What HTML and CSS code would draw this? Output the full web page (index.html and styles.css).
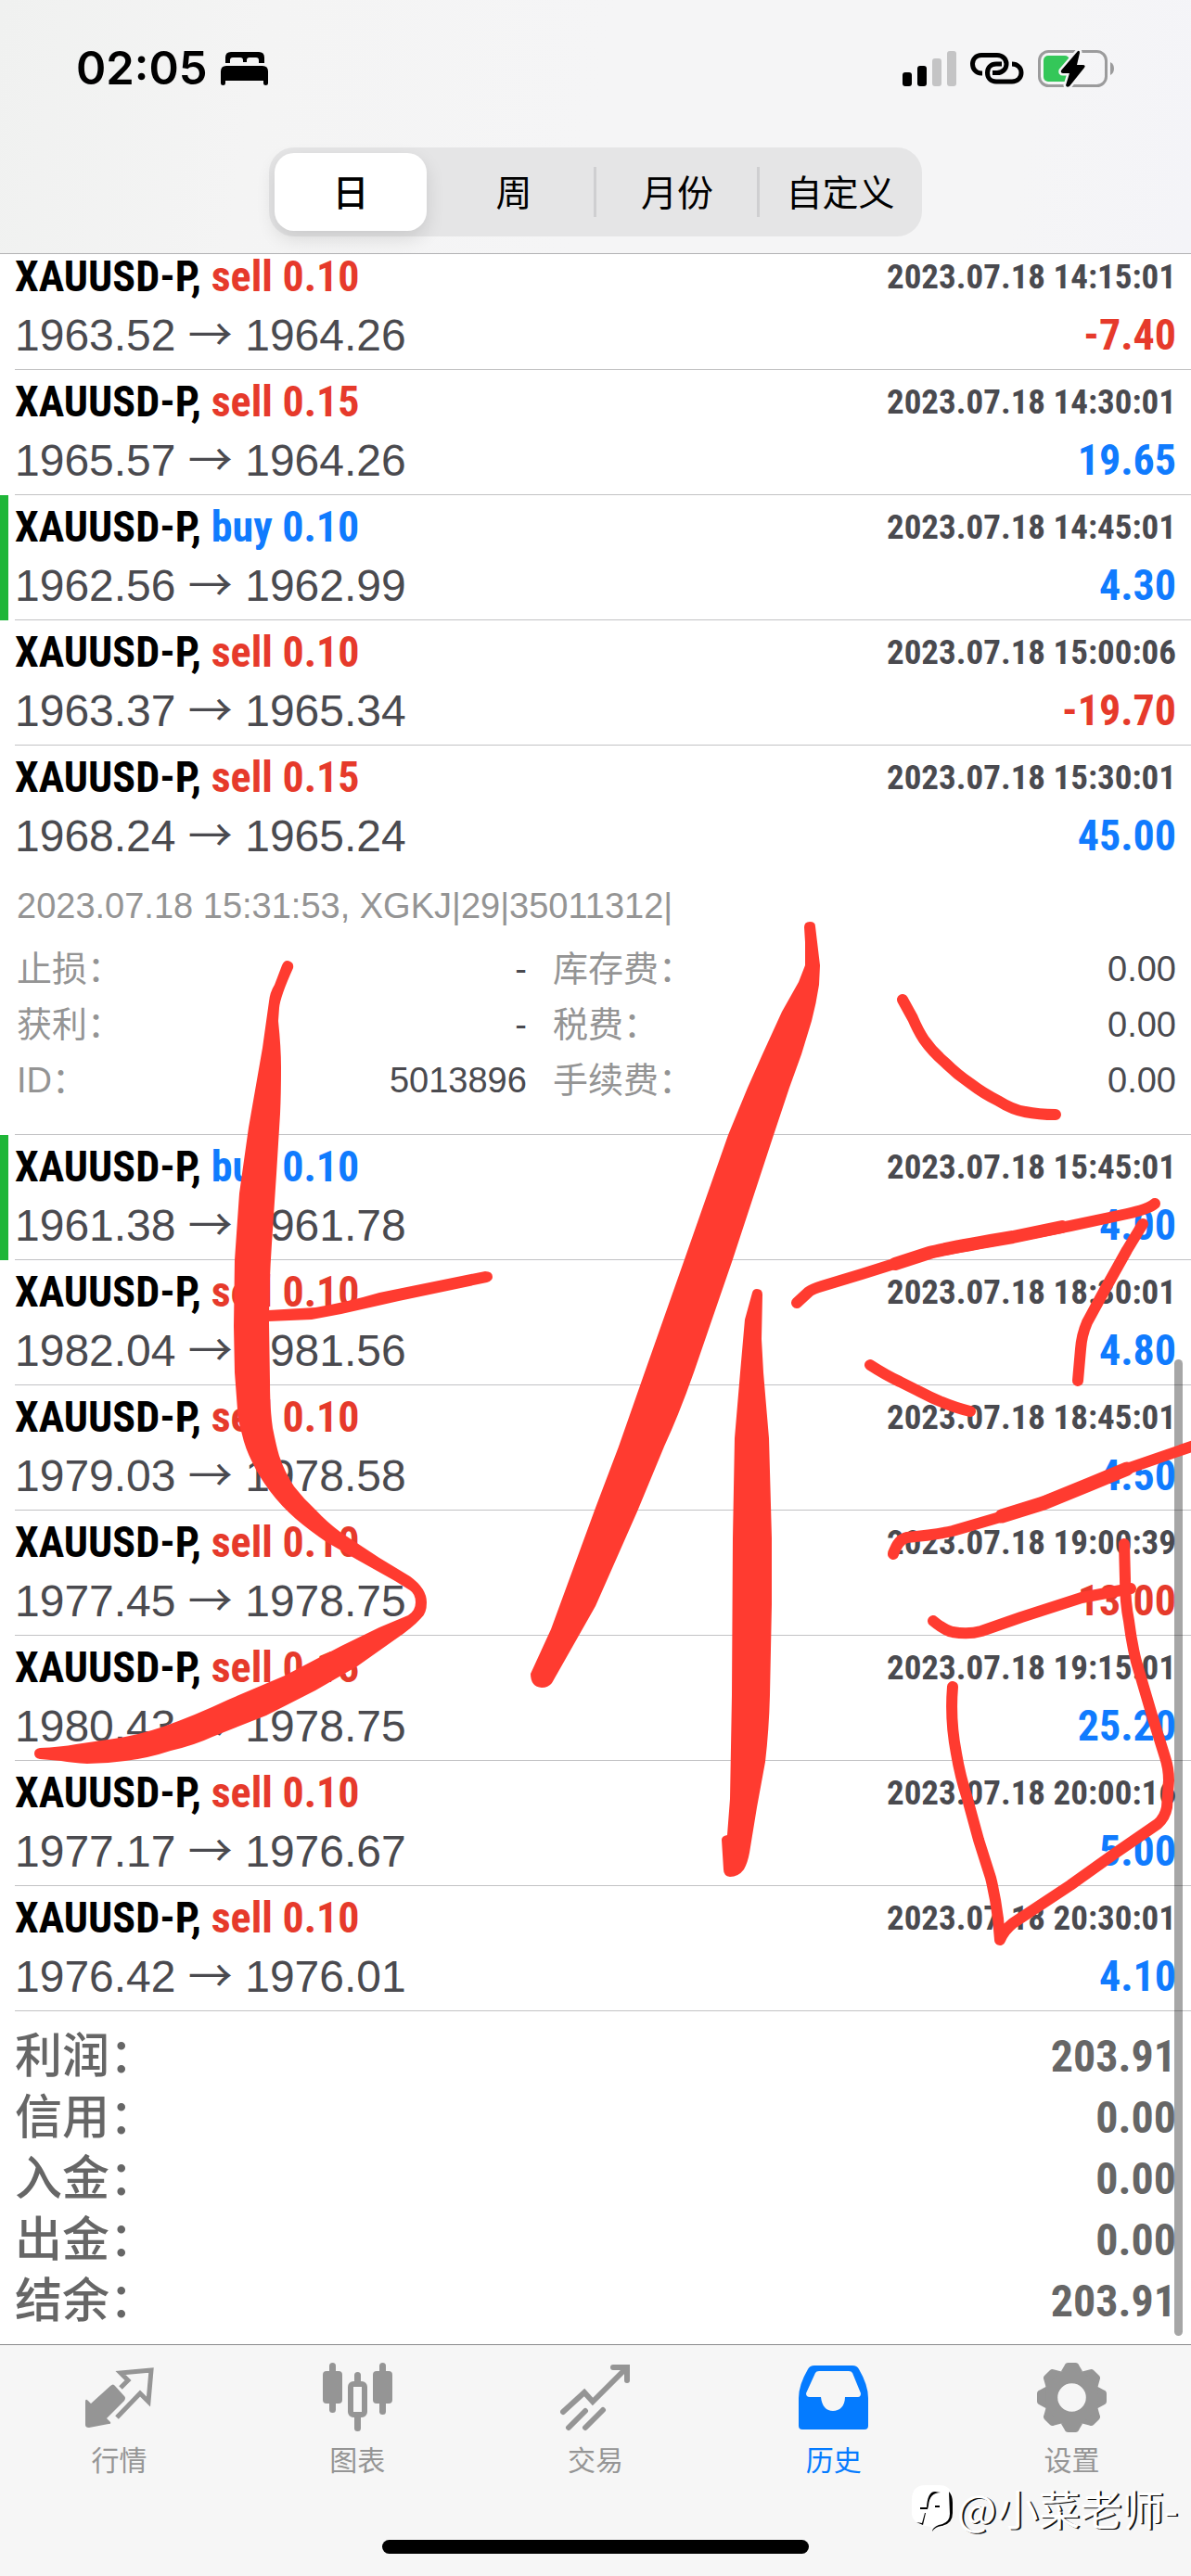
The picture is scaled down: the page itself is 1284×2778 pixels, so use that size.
FILE: index.html
```html
<!DOCTYPE html>
<html lang="zh-CN">
<head>
<meta charset="utf-8">
<meta name="viewport" content="width=device-width">
<title>历史</title>
<link rel="stylesheet" href="styles.css">
</head>
<body>
<header class="header">
  <div class="status">
    <span class="status-time">02:05</span>
    <svg class="icon-bed" viewBox="0 0 51 36" width="51" height="36"><path d="M5 12V6q0-6 6-6H41q6 0 6 6V12H41V9q0-3-3-3H31q-3 0-3 3V11H24V9q0-3-3-3H13q-3 0-3 3V12ZM6 15H45q6 0 6 6V34q0 2-2.500 2T46 34V31H5V34q0 2-2.500 2T0 34V21q0-6 6-6Z"/></svg>
    <span class="status-right">
      <svg viewBox="0 0 58 38" width="58" height="38"><rect y="23" width="10" height="15" rx="3"/><rect x="16" y="16" width="10" height="22" rx="3"/><g fill="#c4c4c5"><rect x="32" y="8" width="10" height="30" rx="3"/><rect x="48" width="10" height="38" rx="3"/></g></svg>
      <svg viewBox="0 0 58 34" width="58" height="34" fill="none" stroke="#000" stroke-width="5"><path d="M13 22H12C6 22 2.500 17 2.500 12S6 2.500 12 2.500H29C35 2.500 39 7 39 12S35 21.500 29 21.500H24"/><path d="M45 12C51 12 55 16 55 21.500S51 31 45 31H28C22 31 18.500 27 18.500 21.500S22 12 28 12H34"/></svg>
      <svg viewBox="0 0 83 40" width="83" height="40"><rect x="1.500" y="1.500" width="72" height="37" rx="10" fill="none" stroke="#9b9b9c" stroke-width="3"/><path d="M78 13q4 2 4 7t-4 7Z" fill="#9b9b9c"/><rect x="6" y="6" width="28" height="28" rx="5" fill="#34c759"/><path d="M43 1L25 22Q24 25 27 25H34L30 38Q31 41 34 39L50 19Q52 16 48 16H42L45 3Q45 0 43 1Z" stroke="#f5f5f6" stroke-width="5" paint-order="stroke"/></svg>
    </span>
  </div>
  <div class="segments">
    <button class="segment is-active" type="button">日</button>
    <button class="segment" type="button">周</button>
    <button class="segment has-rule" type="button">月份</button>
    <button class="segment has-rule" type="button">自定义</button>
  </div>
</header>

<main class="history">
  <ul class="deals">
    <li class="deal"><div class="deal-body">
      <div class="line"><b class="symbol">XAUUSD-P, <span class="neg">sell 0.10</span></b><time class="date">2023.07.18 14:15:01</time></div>
      <div class="line"><span class="prices">1963.52 <i class="arrow">→</i> 1964.26</span><b class="profit neg">-7.40</b></div>
    </div></li>
    <li class="deal"><div class="deal-body">
      <div class="line"><b class="symbol">XAUUSD-P, <span class="neg">sell 0.15</span></b><time class="date">2023.07.18 14:30:01</time></div>
      <div class="line"><span class="prices">1965.57 <i class="arrow">→</i> 1964.26</span><b class="profit pos">19.65</b></div>
    </div></li>
    <li class="deal is-marked"><div class="deal-body">
      <div class="line"><b class="symbol">XAUUSD-P, <span class="pos">buy 0.10</span></b><time class="date">2023.07.18 14:45:01</time></div>
      <div class="line"><span class="prices">1962.56 <i class="arrow">→</i> 1962.99</span><b class="profit pos">4.30</b></div>
    </div></li>
    <li class="deal"><div class="deal-body">
      <div class="line"><b class="symbol">XAUUSD-P, <span class="neg">sell 0.10</span></b><time class="date">2023.07.18 15:00:06</time></div>
      <div class="line"><span class="prices">1963.37 <i class="arrow">→</i> 1965.34</span><b class="profit neg">-19.70</b></div>
    </div></li>
    <li class="deal"><div class="deal-body">
      <div class="line"><b class="symbol">XAUUSD-P, <span class="neg">sell 0.15</span></b><time class="date">2023.07.18 15:30:01</time></div>
      <div class="line"><span class="prices">1968.24 <i class="arrow">→</i> 1965.24</span><b class="profit pos">45.00</b></div>
      <div class="details">
        <p class="comment">2023.07.18 15:31:53, XGKJ|29|35011312|</p>
        <dl class="facts">
          <div class="fact"><dt>止损：</dt><dd>-</dd></div>
          <div class="fact"><dt>库存费：</dt><dd>0.00</dd></div>
          <div class="fact"><dt>获利：</dt><dd>-</dd></div>
          <div class="fact"><dt>税费：</dt><dd>0.00</dd></div>
          <div class="fact"><dt>ID：</dt><dd>5013896</dd></div>
          <div class="fact"><dt>手续费：</dt><dd>0.00</dd></div>
        </dl>
      </div>
    </div></li>
    <li class="deal is-marked"><div class="deal-body">
      <div class="line"><b class="symbol">XAUUSD-P, <span class="pos">buy 0.10</span></b><time class="date">2023.07.18 15:45:01</time></div>
      <div class="line"><span class="prices">1961.38 <i class="arrow">→</i> 1961.78</span><b class="profit pos">4.00</b></div>
    </div></li>
    <li class="deal"><div class="deal-body">
      <div class="line"><b class="symbol">XAUUSD-P, <span class="neg">sell 0.10</span></b><time class="date">2023.07.18 18:30:01</time></div>
      <div class="line"><span class="prices">1982.04 <i class="arrow">→</i> 1981.56</span><b class="profit pos">4.80</b></div>
    </div></li>
    <li class="deal"><div class="deal-body">
      <div class="line"><b class="symbol">XAUUSD-P, <span class="neg">sell 0.10</span></b><time class="date">2023.07.18 18:45:01</time></div>
      <div class="line"><span class="prices">1979.03 <i class="arrow">→</i> 1978.58</span><b class="profit pos">4.50</b></div>
    </div></li>
    <li class="deal"><div class="deal-body">
      <div class="line"><b class="symbol">XAUUSD-P, <span class="neg">sell 0.10</span></b><time class="date">2023.07.18 19:00:39</time></div>
      <div class="line"><span class="prices">1977.45 <i class="arrow">→</i> 1978.75</span><b class="profit neg">-13.00</b></div>
    </div></li>
    <li class="deal"><div class="deal-body">
      <div class="line"><b class="symbol">XAUUSD-P, <span class="neg">sell 0.15</span></b><time class="date">2023.07.18 19:15:01</time></div>
      <div class="line"><span class="prices">1980.43 <i class="arrow">→</i> 1978.75</span><b class="profit pos">25.20</b></div>
    </div></li>
    <li class="deal"><div class="deal-body">
      <div class="line"><b class="symbol">XAUUSD-P, <span class="neg">sell 0.10</span></b><time class="date">2023.07.18 20:00:16</time></div>
      <div class="line"><span class="prices">1977.17 <i class="arrow">→</i> 1976.67</span><b class="profit pos">5.00</b></div>
    </div></li>
    <li class="deal"><div class="deal-body">
      <div class="line"><b class="symbol">XAUUSD-P, <span class="neg">sell 0.10</span></b><time class="date">2023.07.18 20:30:01</time></div>
      <div class="line"><span class="prices">1976.42 <i class="arrow">→</i> 1976.01</span><b class="profit pos">4.10</b></div>
    </div></li>
  </ul>
  <dl class="totals">
    <div class="total"><dt>利润：</dt><dd>203.91</dd></div>
    <div class="total"><dt>信用：</dt><dd>0.00</dd></div>
    <div class="total"><dt>入金：</dt><dd>0.00</dd></div>
    <div class="total"><dt>出金：</dt><dd>0.00</dd></div>
    <div class="total"><dt>结余：</dt><dd>203.91</dd></div>
  </dl>
  <div class="scrollbar"></div>
</main>

<footer class="footer">
  <nav class="tabs">
    <a class="tab" href="#quotes"><svg viewBox="0 0 75 75" width="75" height="75"><path d="M1 42Q1 38 4 41L7 44L28 25Q31 22 33 25L43 36Q45 38 43 41L24 60L28 64Q29 66 26 66L5 70Q1 70 1 67Z"/><path d="M39 27L47 19L39 11L72 8L69 42L60 33L35 59" fill="none" stroke="currentColor" stroke-width="5"/></svg>行情</a>
    <a class="tab" href="#charts"><svg viewBox="0 0 75 75" width="75" height="75"><rect x="7" width="7" height="54" rx="3.500"/><rect y="9" width="21" height="35" rx="4"/><rect x="61" width="7" height="56" rx="3.500"/><rect x="54" y="9" width="21" height="35" rx="4"/><rect x="34" y="10" width="7" height="16" rx="3.500"/><rect x="34" y="55" width="7" height="19" rx="3.500"/><rect x="30" y="23" width="15" height="33" rx="3" fill="none" stroke="currentColor" stroke-width="6"/></svg>图表</a>
    <a class="tab" href="#trade"><svg viewBox="0 0 75 75" width="75" height="75" fill="none" stroke="currentColor" stroke-width="6" stroke-linecap="round"><path d="M3 53L26 32L35 42L71 6M57 5H72V19M9 70L27 52M27 70L46 51"/></svg>交易</a>
    <a class="tab is-current" href="#history"><svg viewBox="0 0 75 75" width="75" height="75"><path fill-rule="evenodd" d="M17 3H58Q63 3 65 7Q75 24 75 38V68Q75 72 71 72H4Q0 72 0 68V38Q0 24 10 7Q12 3 17 3ZM22 9Q19 9 18 11L8 33Q8 37 12 37H24C25 47 30 52 37 52S50 47 50 37H64Q67 37 67 33L58 11Q57 9 54 9Z"/></svg>历史</a>
    <a class="tab" href="#settings"><svg viewBox="-38 -38 76 76" width="75" height="75"><circle r="23" fill="none" stroke="currentColor" stroke-width="15"/><path id="tooth" d="M-12-28L-8-35Q-7-38-4-38H4Q7-38 8-35L12-28Z"/><use href="#tooth" transform="rotate(45)"/><use href="#tooth" transform="rotate(90)"/><use href="#tooth" transform="rotate(135)"/><use href="#tooth" transform="rotate(180)"/><use href="#tooth" transform="rotate(225)"/><use href="#tooth" transform="rotate(270)"/><use href="#tooth" transform="rotate(315)"/></svg>设置</a>
  </nav>
  <div class="home-bar"></div>
  <div class="watermark">
    <svg viewBox="0 0 46 52" width="46" height="52"><path d="M16 1H30Q45 1 45 17V32Q45 44 33 46Q27 46 23 51L22 46Q2 44 1 32V17Q1 1 16 1Z" fill="#fff"/><path d="M41 8Q45 12 45 20V31Q45 43 33 45Q26 46 23 51Q23 47 30 44Q42 42 42 32ZM32 9Q20 9 19 23L18 27H10V25H17Q18 8 26 8ZM16 31L13 44L6 41L12 42L15 31ZM26 23H31V25H26Z"/></svg>
    <span>@小菜老师-</span>
  </div>
</footer>

<!-- Freehand marker layer -->
<svg class="ink" viewBox="0 0 1284 2778" fill="#ff3b30" aria-hidden="true">
  <path d="M304 1041Q307 1034 313 1037Q317 1039 316 1044Q302 1075 301 1087L300 1101Q303 1130 303 1151Q303 1180 302 1201L298 1266L293 1341Q290 1385 290 1426L291 1490Q291 1520 294 1540Q298 1560 301 1570Q307 1588 317 1603Q327 1616 340 1628Q353 1642 368 1653L409 1680L442 1700Q460 1713 460 1728Q460 1740 454 1745Q444 1756 426 1768L385 1797L340 1823L287 1850L229 1873Q210 1882 184 1888Q160 1896 135 1899Q114 1902 94 1902Q78 1901 66 1899L43 1897Q37 1896 37 1891T43 1885Q65 1884 82 1881L123 1875Q150 1871 176 1862Q210 1850 246 1833L307 1807L368 1775L409 1755L440 1742Q448 1737 448 1728T442 1715L426 1705L385 1682L352 1663Q333 1650 319 1638Q303 1624 291 1608Q279 1592 272 1577Q264 1561 261 1547Q256 1530 256 1520L253 1480L252 1430L253 1359L258 1287L268 1216L283 1130L290 1080Q291 1070 296 1062Z"/>
  <path d="M289 1413L340 1410Q375 1404 409 1394L523 1371Q531 1371 531 1377Q531 1381 525 1383L430 1403L368 1417L336 1423L289 1425Z"/>
  <path d="M867 1000Q867 994 873 994T879 999L884 1041L883 1062Q880 1082 875 1101L864 1137L851 1173L834 1224L790 1358L748 1480Q733 1523 716 1560L687 1630L642 1732L595 1815Q591 1820 584 1820Q572 1819 572 1805L594 1757L642 1626L667 1560L695 1480L738 1358L785 1224L806 1173L822 1137L843 1091L861 1059L868 1041L868 1016Z"/>
  <path d="M811 1394Q812 1390 816 1390Q822 1390 822 1396L821 1444L823 1480L829 1551L832 1659V1730L830 1828Q829 1866 825 1900L816 1949L808 1998Q806 2009 802 2016Q796 2024 787 2024Q780 2023 780 2016L778 1984Q778 1980 784 1979L787 1940L789 1828L790 1659L792 1551L798 1480L803 1423Z"/>
  <g fill="none" stroke="#ff3b30" stroke-width="12" stroke-linecap="round" stroke-linejoin="round">
    <path d="M973 1078L984 1098Q990 1112 996 1121Q1005 1134 1019 1146Q1032 1159 1047 1169Q1060 1179 1076 1187Q1092 1197 1105 1199Q1120 1202 1138 1202"/>
    <path d="M859 1405L872 1393Q876 1390 886 1387L929 1374L1002 1351L1092 1334L1154 1322L1215 1309Q1238 1304 1245 1298"/>
    <path stroke-width="14" d="M965 1363L1002 1351Q1015 1347 1092 1334L1145 1323"/>
    <path d="M1232 1320L1215 1348L1191 1391L1172 1426Q1166 1440 1165 1455L1162 1489"/>
    <path d="M938 1472Q955 1483 970 1490L990 1500Q1020 1516 1046 1522"/>
    <path d="M963 1676Q968 1660 978 1658Q1010 1655 1027 1651L1092 1632L1174 1601L1215 1584L1290 1558"/>
    <path stroke-width="15" d="M1080 1635L1125 1621L1174 1601L1215 1584"/>
    <path d="M1006 1748Q1018 1758 1027 1760Q1044 1763 1058 1759L1101 1744L1166 1723L1219 1713"/>
    <path d="M1212 1665L1213 1703Q1213 1728 1217 1748Q1220 1772 1225 1792L1242 1850L1256 1895Q1260 1907 1260 1920L1258 1949Q1256 1960 1248 1967L1203 1998L1154 2033L1092 2074Q1082 2082 1078 2092Q1077 2080 1076 2069Q1073 2045 1068 2025L1055 1984L1043 1940Q1035 1915 1031 1891Q1024 1855 1027 1819"/>
  </g>
</svg>
</body>
</html>
```
FILE: styles.css
```css
* { box-sizing: border-box; }

body {
  --cjk: "Noto Sans CJK SC", sans-serif;
  --gray: #4a4a4f;
  position: relative;
  display: flex;
  flex-direction: column;
  min-height: 100vh;
  margin: 0;
  overflow-x: hidden;
  background: #fff;
  color: #000;
  font-family: "Liberation Sans", var(--cjk);
}

svg { display: block; flex: none; }
ul, dl, dd, p { margin: 0; padding: 0; }
ul { list-style: none; }

.header {
  position: relative;
  z-index: 1;
  height: 274px;
  border-bottom: 1px solid #b2b2b4;
  background: linear-gradient(100deg, #f0f1f0 0, #f4f4f4 22%, #f5f5f6 50%, #f5f5f6 85%, #f4f4f8 100%);
}

.status {
  display: flex;
  align-items: center;
  height: 147px;
  padding: 0 82px;
}
.status-time { font: 600 49px/60px Inter, sans-serif; }
.icon-bed { margin-left: 14px; }
.status-right {
  display: flex;
  align-items: center;
  gap: 15px;
  margin-left: auto;
}

.segments {
  display: grid;
  grid-template-columns: repeat(4, 1fr);
  width: 704px;
  max-width: 100%;
  height: 96px;
  margin: 12px auto 0;
  border-radius: 27px;
  background: #e5e5e6;
}
.segment {
  position: relative;
  margin: 6px;
  padding: 0 0 4px;
  border: 0;
  border-radius: 21px;
  background: none;
  color: #000;
  font: 400 39px/58px var(--cjk);
}
.segment.is-active {
  background: #fff;
  box-shadow: 0 8px 20px rgba(0, 0, 0, .12);
  font-weight: 500;
}
.segment.has-rule::before {
  content: "";
  position: absolute;
  top: 15px;
  bottom: 15px;
  left: -8px;
  width: 3px;
  background: #cfcfd1;
}

.history { position: relative; }
.deals { margin-top: -10px; }
.deal-body {
  margin-left: 16px;
  padding: 3px 16px 5px 0;
  border-bottom: 1px solid #c2c2c4;
}
.is-marked { border-left: 9px solid #1fb638; }
.is-marked .deal-body { margin-left: 7px; }

.line {
  display: flex;
  align-items: center;
  justify-content: space-between;
  height: 63px;
  line-height: 63px;
  white-space: nowrap;
}
.symbol, .date, .profit, .total dd {
  font-family: "Roboto Condensed", Roboto, "Liberation Sans", sans-serif;
  font-weight: 700;
}
.symbol { font-size: 46px; }
.date { color: var(--gray); font-size: 37px; }
.prices { color: var(--gray); font-size: 48px; }
.profit { font-size: 46px; }
.arrow { font-family: var(--cjk); font-style: normal; line-height: 1px; }
.neg { color: #e63a2b; }
.pos { color: #107bfe; }

.details {
  padding: 12px 0 23px 2px;
  color: #949494;
  font-size: 38px;
}
.comment { height: 70px; line-height: 64px; }
.facts {
  display: grid;
  grid-template-columns: 9fr 11fr;
  column-gap: 28px;
}
.fact {
  display: flex;
  justify-content: space-between;
  height: 60px;
  line-height: 60px;
}
.fact dd { color: var(--gray); }

.totals { padding: 16px 16px 12px; color: #666; }
.total {
  display: flex;
  justify-content: space-between;
  height: 66px;
  font-size: 51px;
  font-weight: 500;
  line-height: 66px;
}
.total dd { font-size: 48px; }

.scrollbar {
  position: absolute;
  right: 9px;
  bottom: 8px;
  width: 9px;
  height: 1053px;
  border-radius: 5px;
  background: rgba(0, 0, 0, .35);
}

.footer {
  position: relative;
  height: 250px;
  margin-top: auto;
  border-top: 1px solid #8a8a8c;
  background: #f6f6f6;
}
.tabs { display: grid; grid-template-columns: repeat(5, 1fr); }
.tab {
  display: flex;
  flex-direction: column;
  align-items: center;
  gap: 6px;
  padding-top: 19px;
  color: #959595;
  fill: currentColor;
  font: 400 30px/44px var(--cjk);
  text-decoration: none;
}
.tab.is-current { color: #047bff; }
.home-bar {
  width: 460px;
  height: 15px;
  margin: 66px auto 0;
  border-radius: 8px;
  background: #000;
}
.watermark {
  position: absolute;
  top: 149px;
  right: 14px;
  display: flex;
  align-items: center;
  gap: 4px;
  color: #fff;
  font: 400 45px/54px var(--cjk);
  text-shadow: 2px 1px 0 #111;
}
.watermark svg { fill: #000; }

.ink {
  position: absolute;
  z-index: 2;
  top: 0;
  left: 0;
  width: 100%;
  pointer-events: none;
}
```
